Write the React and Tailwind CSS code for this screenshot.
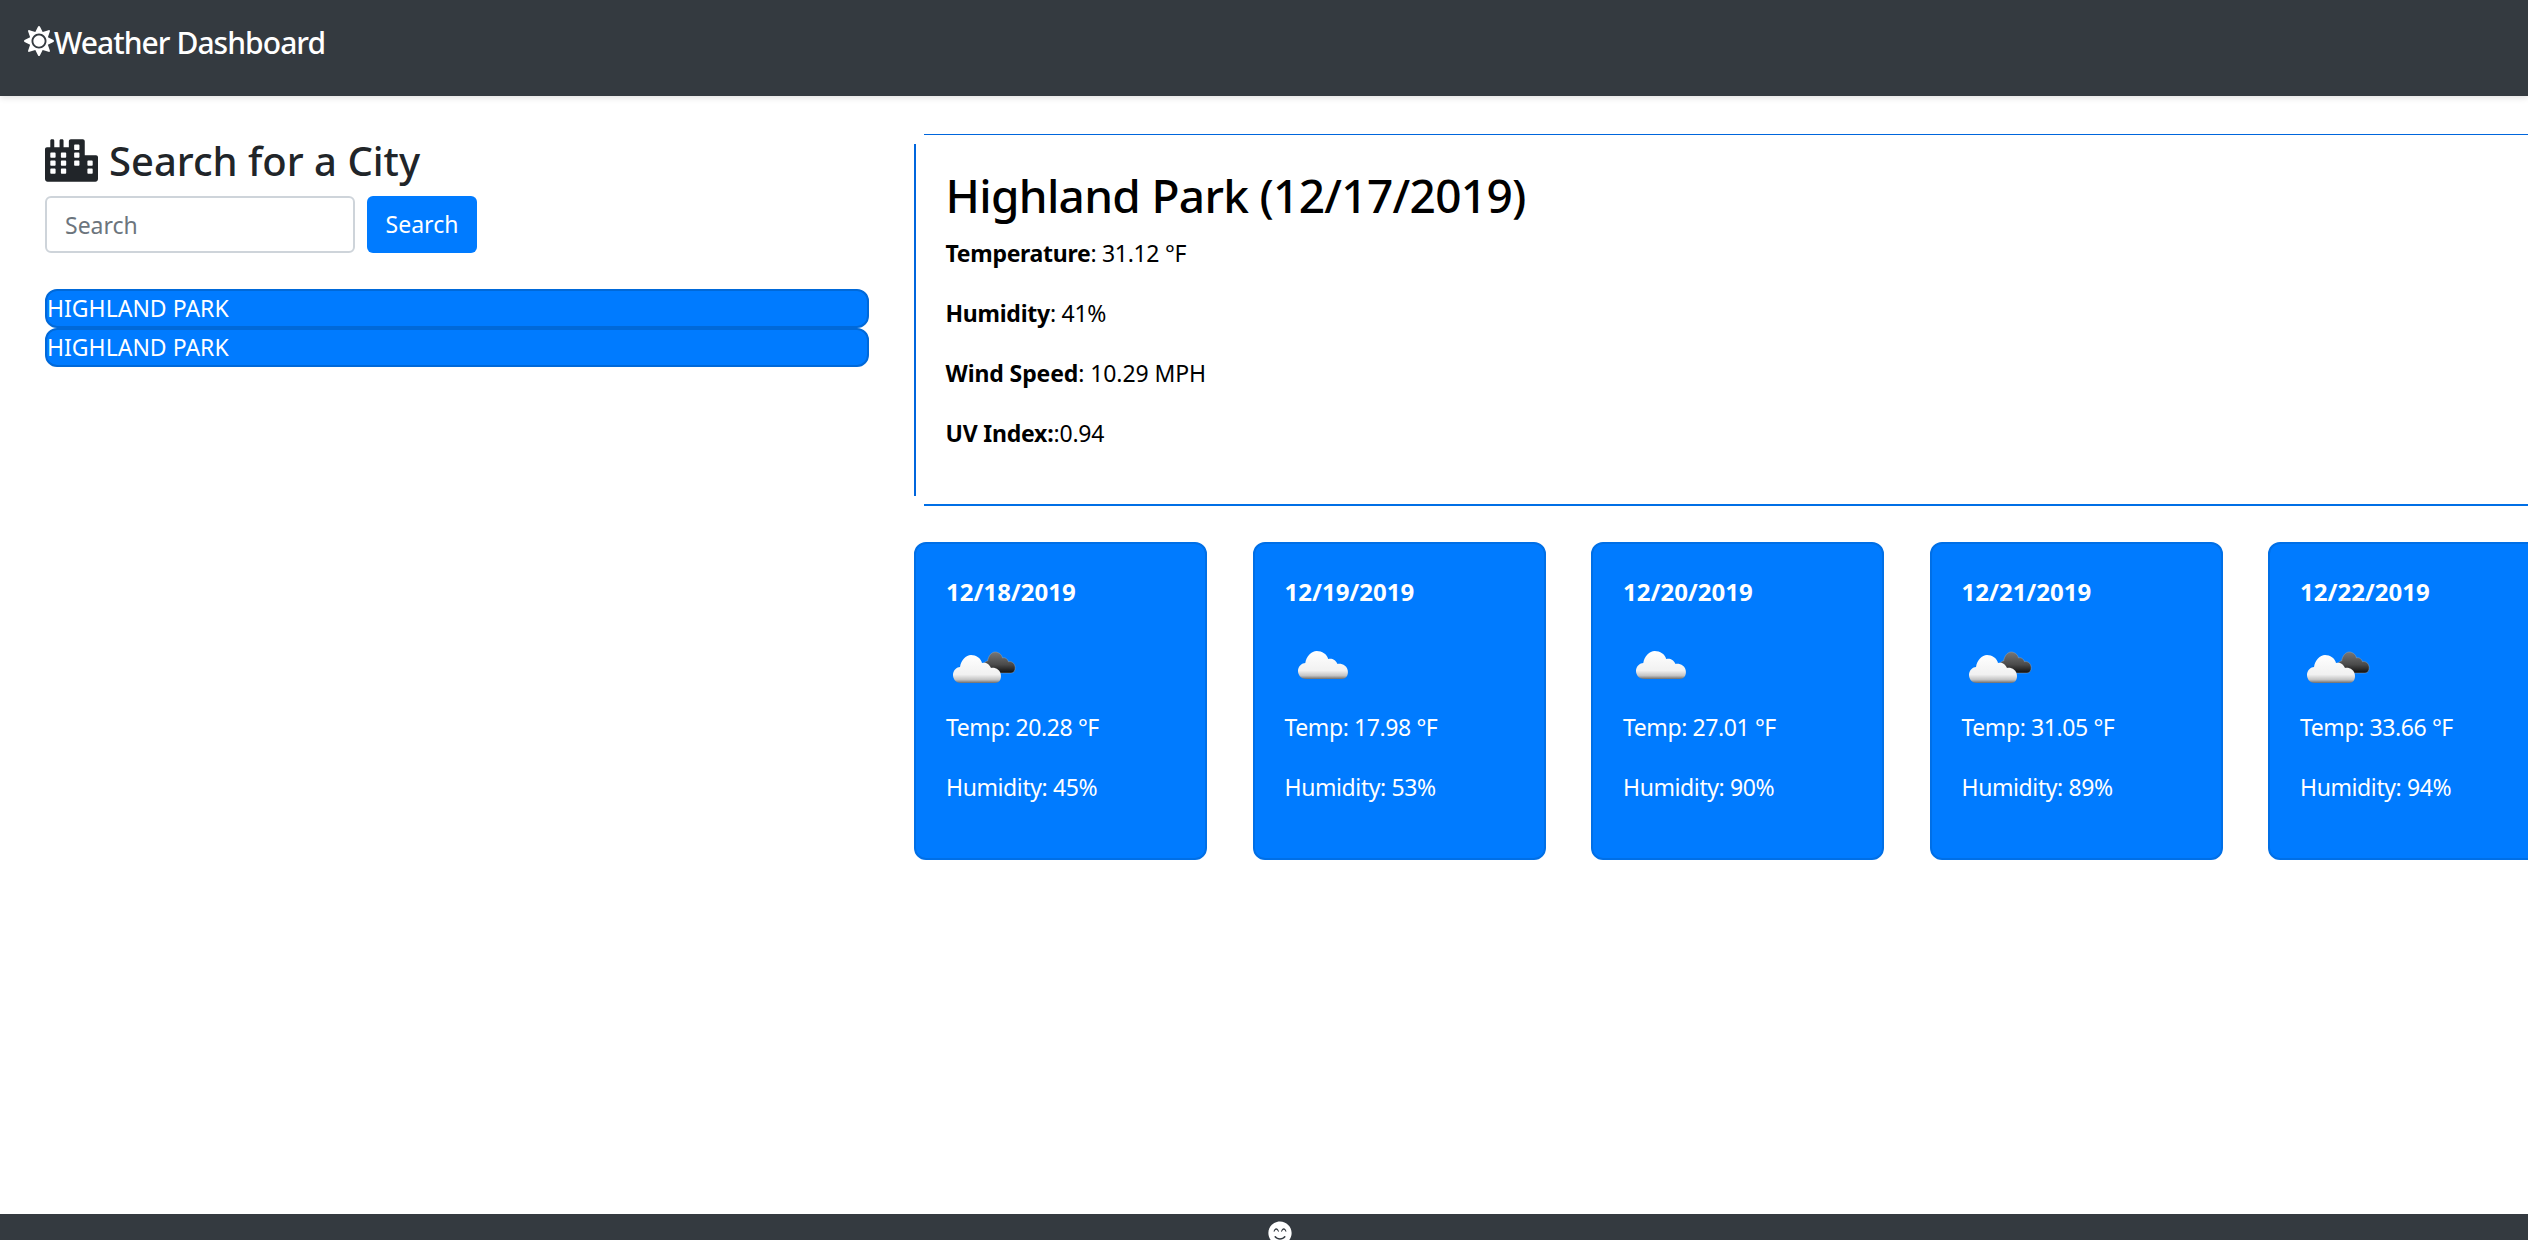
import { FaCity, FaSun, FaSmileBeam } from 'react-icons/fa'

const forecast = [
  { date: '12/18/2019', temp: '20.28', humidity: '45', icon: 'broken' },
  { date: '12/19/2019', temp: '17.98', humidity: '53', icon: 'scattered' },
  { date: '12/20/2019', temp: '27.01', humidity: '90', icon: 'scattered' },
  { date: '12/21/2019', temp: '31.05', humidity: '89', icon: 'broken' },
  { date: '12/22/2019', temp: '33.66', humidity: '94', icon: 'broken' },
]

const CLOUD = 'M8 28C2 28 0 23 0 20C0 15 4 12 7 12C8 5 13 0 18 0C23 0 28 3 29 8C32 7 36 8 38 13C41 12 48 14 48 21C48 25 46 28 42 28Z'

function WeatherIcon({ type, id }) {
  return (
    <svg width="75" height="54" viewBox="0 0 75 54" className="block">
      <defs>
        <linearGradient id={`white-${id}`} x1="0" y1="0" x2="0" y2="1">
          <stop offset="0" stopColor="#ffffff" />
          <stop offset="0.7" stopColor="#f1f1f1" />
          <stop offset="0.88" stopColor="#c4c4c4" />
          <stop offset="1" stopColor="#6e6e6e" />
        </linearGradient>
        <linearGradient id={`dark-${id}`} x1="0" y1="0" x2="0" y2="1">
          <stop offset="0" stopColor="#777777" />
          <stop offset="0.6" stopColor="#4a4a4a" />
          <stop offset="1" stopColor="#101010" />
        </linearGradient>
      </defs>
      {type === 'broken' ? (
        <g>
          <path d={CLOUD} transform="translate(37 10) scale(0.67 0.75)" fill={`url(#dark-${id})`} stroke="#a9a9a9" strokeWidth="0.6" />
          <path d={CLOUD} transform="translate(7 13)" fill={`url(#white-${id})`} />
        </g>
      ) : (
        <path d={CLOUD} transform="translate(13 9) scale(1.04 1)" fill={`url(#white-${id})`} />
      )}
    </svg>
  )
}

function ForecastCard({ day, id }) {
  return (
    <div className="w-[293px] h-[318px] shrink-0 rounded-[12px] border-2 border-[#006fe6] bg-[#007bff] px-[30px] pt-[30px] text-white">
      <p className="text-[24px] leading-[36px] font-bold">{day.date}</p>
      <div className="mt-[32px] h-[54px]">
        <WeatherIcon type={day.icon} id={id} />
      </div>
      <p className="mt-[13px] text-[23px] leading-[36px] tracking-[-0.4px]">Temp: {day.temp} °F</p>
      <p className="mt-[24px] text-[23px] leading-[36px] tracking-[-0.4px]">Humidity: {day.humidity}%</p>
    </div>
  )
}

function CityButton({ name }) {
  return (
    <button className="block w-full h-[39px] rounded-[12px] border-2 border-[#0069d9] bg-[#007bff] text-left text-[23px] leading-[35px] text-white">
      {name}
    </button>
  )
}

function App() {
  return (
    <div className="flex h-[1240px] w-[2528px] flex-col overflow-hidden bg-white text-[#212529] font-['Noto_Sans',sans-serif]">
      <nav className="flex h-[96px] shrink-0 items-start bg-[#343a40] pl-[24px] pt-[22px] shadow-[0_2px_6px_rgba(0,0,0,0.12)]">
        <FaSun className="mt-[4px] text-[30px] text-white" />
        <span className="text-[30px] leading-[42px] font-medium text-white tracking-[-0.95px]">Weather Dashboard</span>
      </nav>

      <main className="flex flex-1 pl-[45px] pt-[38px]">
        <aside className="w-[824px] shrink-0">
          <div className="flex items-center gap-[11px]">
            <FaCity className="text-[53px]" />
            <h2 className="text-[40px] leading-[48px] font-medium">Search for a City</h2>
          </div>
          <form className="mt-[9px] flex gap-[12px]">
            <input
              placeholder="Search"
              className="h-[57px] w-[310px] rounded-[6px] border-2 border-[#ced4da] bg-white px-[18px] text-[23px] placeholder:text-[#6c757d]"
            />
            <button type="button" className="h-[57px] w-[110px] rounded-[6px] bg-[#007bff] text-[23px] text-white">
              Search
            </button>
          </form>
          <div className="mt-[36px]">
            <CityButton name="HIGHLAND PARK" />
            <CityButton name="HIGHLAND PARK" />
          </div>
        </aside>

        <section className="ml-[45px] w-[1800px] shrink-0 text-black">
          <div className="flex h-[372px]">
            <div className="my-[10px] w-[1.5px] shrink-0 bg-[#0066dd]" />
            <div className="ml-[8px] flex-1 border-t border-b-2 border-t-[#0066dd] border-b-[#006fe6] pl-[22px] pt-[31px]">
              <h1 className="text-[46px] leading-[58px] font-medium tracking-[-0.7px]">Highland Park (12/17/2019)</h1>
              <p className="mt-[11px] text-[23px] leading-[36px] tracking-[-0.3px]"><b>Temperature</b>: 31.12 °F</p>
              <p className="mt-[24px] text-[23px] leading-[36px] tracking-[-0.25px]"><b>Humidity</b>: 41%</p>
              <p className="mt-[24px] text-[23px] leading-[36px] tracking-[-0.1px]"><b>Wind Speed</b>: 10.29 MPH</p>
              <p className="mt-[24px] text-[23px] leading-[36px] tracking-[-0.2px]"><b>UV Index:</b>:0.94</p>
            </div>
          </div>
          <div className="mt-[36px] flex gap-[45.5px]">
            {forecast.map((day, i) => (
              <ForecastCard key={day.date} day={day} id={i} />
            ))}
          </div>
        </section>
      </main>

      <footer className="flex h-[26px] shrink-0 justify-center overflow-hidden bg-[#343a40] pl-[32px] pt-[7px]">
        <FaSmileBeam className="shrink-0 text-[24px] text-white" />
      </footer>
    </div>
  )
}

export default App
